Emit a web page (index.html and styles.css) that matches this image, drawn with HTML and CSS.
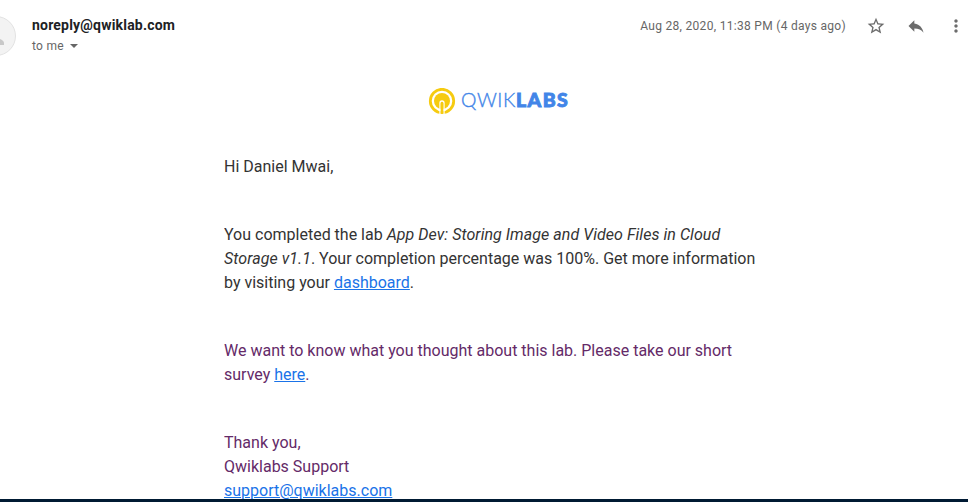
FILE: index.html
```html
<!DOCTYPE html>
<html lang="en">
<head>
<meta charset="utf-8">
<title>Qwiklabs</title>
<link rel="stylesheet" href="styles.css">
</head>
<body>
<header class="head">
  <div class="avatar"><svg width="40" height="40" viewBox="0 0 40 40"><circle cx="20" cy="20" r="19.5" fill="#f3f3f3" stroke="#e2e2e2"/><circle cx="16" cy="16" r="6" fill="#c8c8c8"/><path d="M4 29v-2c0-4 8-5.500 12-5.500s12 1.500 12 5.500v2z" fill="#c8c8c8"/></svg></div>
  <div class="sender">
    <div class="from">noreply@qwiklab.com</div>
    <div class="to">to me <span class="caret"></span></div>
  </div>
  <div class="date">Aug 28, 2020, 11:38 PM (4 days ago)</div>
  <div class="actions">
    <svg width="20" height="20" viewBox="0 0 24 24"><path d="M22 9.24l-7.19-.62L12 2 9.19 8.63 2 9.24l5.46 4.73L5.82 21 12 17.27 18.18 21l-1.63-7.03L22 9.24zM12 15.4l-3.76 2.27 1-4.28-3.32-2.88 4.38-.38L12 6.1l1.71 4.04 4.38.38-3.32 2.88 1 4.28L12 15.4z"/></svg>
    <svg width="20" height="20" viewBox="0 0 24 24"><path d="M10 9V5l-7 7 7 7v-4.100c5 0 8.500 1.600 11 5.100-1-5-4-10-11-11z"/></svg>
    <svg width="20" height="20" viewBox="0 0 24 24"><path d="M12 8c1.100 0 2-.9 2-2s-.9-2-2-2-2 .9-2 2 .9 2 2 2zm0 2c-1.100 0-2 .9-2 2s.9 2 2 2 2-.9 2-2-.9-2-2-2zm0 6c-1.100 0-2 .9-2 2s.9 2 2 2 2-.9 2-2-.9-2-2-2z"/></svg>
  </div>
</header>
<main class="mail">
  <div class="logo">
    <svg width="28" height="28" viewBox="0 0 28 28"><circle cx="14" cy="14" r="11.700" fill="none" stroke="#f6cb10" stroke-width="2.800"/><circle cx="14" cy="14" r="8" fill="#f6cb10"/><path d="M12 27v-11a2 2 0 0 1 4 0v11" fill="none" stroke="#fff" stroke-width="1.300"/><path d="M12.700 16.500a1.300 1.300 0 0 1 2.600 0V26.500h-2.600z" fill="#f6cb10"/></svg>
    <span class="word">QWIK<b>LABS</b></span>
  </div>
  <p>Hi Daniel Mwai,</p>
  <p>You completed the lab <i>App Dev: Storing Image and Video Files in Cloud<br>Storage v1.1</i>. Your completion percentage was 100%. Get more information<br>by visiting your <a>dashboard</a>.</p>
  <p class="purple">We want to know what you thought about this lab. Please take our short<br>survey <a>here</a>.</p>
  <p class="purple">Thank you,<br>Qwiklabs Support<br><a>support@qwiklabs.com</a></p>
</main>
<footer class="edge"></footer>
</body>
</html>
```
FILE: styles.css
```css
body { margin: 0; height: 502px; overflow: hidden; background: #fff; font-family: Roboto, sans-serif; display: flex; flex-direction: column; }
.head { display: flex; height: 88px; flex: none; }
.avatar { margin: 16px 16px 0 -24px; width: 40px; flex: none; }
.sender { flex: 1; padding-top: 15px; }
.from { font-size: 14px; font-weight: 700; line-height: 20px; color: #202124; letter-spacing: .2px; }
.to { margin-top: 1px; font-size: 12px; line-height: 20px; color: #666; letter-spacing: .3px; display: flex; align-items: center; gap: 6px; }
.caret { border: 4px solid transparent; border-top-color: #666; border-bottom: 0; }
.date { font-size: 12px; line-height: 20px; padding-top: 16px; color: #666; letter-spacing: .3px; }
.actions { display: flex; gap: 20px; margin: 16px 2px 0 20px; fill: #6c6c6c; }
.mail { width: 550px; margin-left: 224px; flex: 1; min-height: 0; overflow: hidden; font-size: 16px; line-height: 24px; color: #333; white-space: nowrap; }
.logo { display: flex; align-items: center; height: 26px; margin: 0 0 41px 204px; gap: 5px; }
.word { font: 300 19.5px/24px Lato, sans-serif; color: #4285e8; letter-spacing: .6px; margin-top: -2px; -webkit-text-stroke: .35px #4285e8; }
.word b { font-weight: 900; letter-spacing: 1.4px; -webkit-text-stroke: .9px #4285e8; }
p { margin: 0 0 44px; }
i { letter-spacing: .05px; }
.purple { color: #642a68; }
a { color: #1a73e8; text-decoration: underline; }
.edge { height: 3px; background: #001a33; flex: none; }
```
